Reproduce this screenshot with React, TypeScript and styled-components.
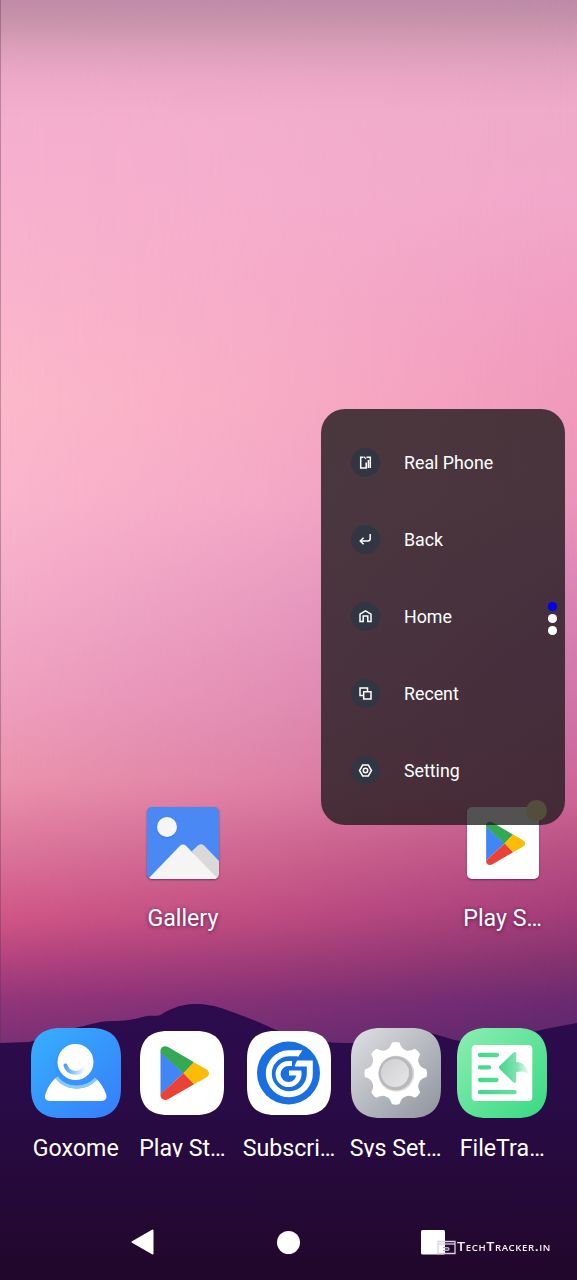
import React from "react";
import styled, { createGlobalStyle } from "styled-components";

const GlobalStyle = createGlobalStyle`
  *, *::before, *::after { box-sizing: border-box; }
  body { margin: 0; background: #22082f; font-family: Roboto, "Noto Sans", sans-serif; }
  svg { display: block; }
`;

const Screen = styled.main`
  position: relative;
  width: 577px;
  height: 1280px;
  overflow: hidden;
  display: flex;
  flex-direction: column;
  isolation: isolate;
`;

const Sky = styled.div`
  position: absolute;
  inset: 0;
  z-index: -1;
  background: linear-gradient(180deg, #bd8aaa 0, #c693aa 20px, #d79db7 45px, #e6a5c2 75px, #f0aaca 110px, #f2a8cb 200px, #f19fc2 300px, #f19abb 400px, #eb95bb 500px, #d983b5 600px, #d075a8 700px, #cc6496 800px, #b95083 850px, #a83f7c 905px, #84336f 960px, #6b2a70 1000px, #5c276c 1045px);
  &::before {
    content: "";
    position: absolute;
    inset: 0;
    background: linear-gradient(180deg, #bf8ba8 0, #c893aa 20px, #da9eb8 45px, #eca8c7 75px, #f5afce 120px, #f8b2cc 250px, #fcb8cb 400px, #fab5cc 500px, #f4abc7 600px, #ee9fbd 700px, #ea93ad 780px, #dc759a 850px, #cf5585 920px, #b3437e 960px, #93357a 1000px, #7a3075 1045px);
    mask-image: linear-gradient(90deg, #000, rgba(0, 0, 0, 0.62) 45%, transparent);
  }
  &::after {
    content: "";
    position: absolute;
    inset: 0 auto 0 0;
    width: 1px;
    background: rgba(80, 50, 80, 0.35);
  }
`;

const Mountains = styled.svg`
  position: absolute;
  left: 0;
  bottom: 0;
  z-index: -1;
`;

const Desktop = styled.section`
  flex: none;
  height: 1028px;
  padding: 807px 21px 0 23px;
  display: grid;
  grid-template-columns: repeat(5, 1fr);
  align-items: start;
`;

const Dock = styled.section`
  flex: none;
  height: 176px;
  padding: 0 21.5px 0 22.5px;
  display: grid;
  grid-template-columns: repeat(5, 1fr);
  align-items: start;
`;

const Launcher = styled.div<{ $column?: number }>`
  display: flex;
  flex-direction: column;
  align-items: center;
  ${({ $column }) => ($column ? `grid-column: ${$column};` : "")}
`;

const IconBox = styled.div<{ $size: number }>`
  position: relative;
  height: ${({ $size }) => $size}px;
  display: flex;
  align-items: center;
  justify-content: center;
`;

const Tile = styled.div<{ $color: string }>`
  width: 72px;
  height: 72px;
  border-radius: 5px;
  overflow: hidden;
  background: ${({ $color }) => $color};
  box-shadow: 0 1px 2px rgba(40, 10, 40, 0.5);
`;

const Badge = styled.span`
  position: absolute;
  right: -8px;
  top: -7px;
  width: 21px;
  height: 21px;
  border-radius: 50%;
  background: #fff0a8;
`;

const Label = styled.span<{ $shadow?: boolean; $gap: number }>`
  margin-top: ${({ $gap }) => $gap}px;
  height: ${({ $shadow }) => ($shadow ? 34 : 23)}px;
  line-height: ${({ $shadow }) => ($shadow ? 26 : 29)}px;
  font-size: 23.2px;
  white-space: nowrap;
  overflow: ${({ $shadow }) => ($shadow ? "visible" : "hidden")};
  color: #fff;
  text-shadow: ${({ $shadow }) => ($shadow ? "0 1px 4px rgba(60,10,50,.75)" : "none")};
`;

const NavBar = styled.nav`
  flex: none;
  height: 76px;
  padding: 0 132px 0 131px;
  display: flex;
  align-items: center;
  justify-content: space-between;
`;

const Menu = styled.aside`
  position: absolute;
  left: 321px;
  top: 409px;
  width: 243.5px;
  height: 415.5px;
  padding: 15px 0 0 30px;
  border-radius: 24px;
  background: linear-gradient(rgba(17, 17, 17, 0.75), rgba(25, 23, 24, 0.75));
`;

const MenuRow = styled.div`
  height: 77px;
  display: flex;
  align-items: center;
  gap: 24px;
  color: #fff;
  font-size: 17.8px;
`;

const MenuIcon = styled.span`
  width: 29px;
  height: 29px;
  border-radius: 50%;
  background: #323643;
  display: flex;
  align-items: center;
  justify-content: center;
`;

const Pager = styled.div`
  position: absolute;
  right: 8px;
  top: 193px;
  display: flex;
  flex-direction: column;
  gap: 3.5px;
`;

const PagerDot = styled.i<{ $active?: boolean }>`
  width: 8.5px;
  height: 8.5px;
  border-radius: 50%;
  background: ${({ $active }) => ($active ? "#0000f5" : "#fff")};
`;

const Watermark = styled.div`
  position: absolute;
  left: 437px;
  top: 1237px;
  display: flex;
  align-items: center;
  gap: 1px;
  height: 20px;
`;

const WatermarkText = styled.span`
  color: #f6f0f8;
  font: 600 12px/20px "Open Sans", sans-serif;
  font-variant-caps: small-caps;
  letter-spacing: 0.5px;
  white-space: nowrap;
  transform: scaleX(1.2);
  transform-origin: left;
`;

const SQUIRCLE =
  "M30 0H60C80 0 90 10 90 30V60C90 80 80 90 60 90H30C10 90 0 80 0 60V30C0 10 10 0 30 0Z";

const PlayMark = () => (
  <>
    <path d="M20.5 21V63.5L43.7 42Z" fill="#4285f4" />
    <path d="M20.5 21C20 16 24.500 13.800 28.500 16.200L54 31.200 43.600 42.200 20.500 21.500Z" fill="#34a853" />
    <path d="M54 31.200L66.200 38.200C69.900 40.400 69.900 44.200 66.200 46.400L54 53.200 43.300 42.200Z" fill="#fbbc04" />
    <path d="M20.500 63.300C20 68.200 24.500 70.300 28.500 68L54 53.200 43.500 42.200Z" fill="#ea4335" />
  </>
);

const PlayDockIcon = () => (
  <svg width="84" height="84" viewBox="0 0 84 84">
    <path d={SQUIRCLE} transform="scale(.9333)" fill="#fff" />
    <PlayMark />
  </svg>
);

const PlayTileIcon = () => (
  <svg width="72" height="72" viewBox="0 0 72 72">
    <g transform="translate(2.600 2.500) scale(.805)">
      <PlayMark />
    </g>
  </svg>
);

const GalleryIcon = () => (
  <svg width="72" height="72" viewBox="0 0 72 72">
    <circle cx="20" cy="21" r="10.500" fill="#2f6ad2" opacity=".35" />
    <circle cx="20" cy="20" r="10" fill="#f5f5f5" />
    <path d="M45 44L51 38.500Q54 36 57 38.500L72 54V72H58Z" fill="#d9d9da" />
    <path d="M2 71L33 38.800Q36 36 39 38.800L71 72H2Z" fill="#f5f5f5" />
  </svg>
);

const UserIcon = () => (
  <svg width="90" height="90" viewBox="0 0 90 90">
    <defs>
      <linearGradient id="userBg" x1="0" y1="0" x2="1" y2="1">
        <stop offset="0" stopColor="#36b0fe" />
        <stop offset="1" stopColor="#367dfa" />
      </linearGradient>
      <linearGradient id="smile" x1="0" y1="0" x2="1" y2="0">
        <stop offset="0" stopColor="#4a9ff2" />
        <stop offset="1" stopColor="#fff" />
      </linearGradient>
    </defs>
    <path d={SQUIRCLE} fill="url(#userBg)" />
    <path d="M25.500 49.500C31 57 37 60.500 46 60.500S61 57 66 51.500C70 55 73 61 75 66C76.500 70 74.500 73 70.500 73H19C14.500 73 13 70 14.500 66C16.500 60 20 53.500 25.500 49.500Z" fill="#fff" />
    <path d="M25.500 49.500C30 55.500 36 59 45 59S60 57 65 50.500" fill="none" stroke="#8cc8fb" strokeWidth="3" />
    <circle cx="44.500" cy="36.500" r="20.500" fill="#3893fb" />
    <circle cx="44.500" cy="34" r="18" fill="#fff" />
    <path d="M34.500 37.500C37 46 49 47.500 54.500 39" fill="none" stroke="url(#smile)" strokeWidth="4" strokeLinecap="round" />
  </svg>
);

const SpiralIcon = () => (
  <svg width="84" height="84" viewBox="0 0 84 84">
    <path d={SQUIRCLE} transform="scale(.9333)" fill="#fff" />
    <circle cx="41.500" cy="42" r="31.500" fill="#1a6fe0" />
    <g fill="none" stroke="#fff">
      <path d="M52 22.200H41.500A20.500 20.500 0 1 0 62.800 42V32.500H48" strokeWidth="6" />
      <path d="M49 32.500H41.500A10.500 10.500 0 1 0 52 42H42" strokeWidth="5" />
    </g>
    <path d="M50 19.200H55.500L51.500 25.200H50Z" fill="#fff" />
    <path d="M51.200 27L47.500 35H45V27Z" fill="#1a6fe0" />
  </svg>
);

const gearPath = (() => {
  const cx = 44.7;
  const cy = 45.3;
  const at = (r: number, deg: number) => {
    const a = (deg * Math.PI) / 180;
    return `${(cx + r * Math.cos(a)).toFixed(2)} ${(cy + r * Math.sin(a)).toFixed(2)}`;
  };
  let d = "";
  for (let i = 0; i < 8; i++) {
    const t = i * 45;
    d += `${i ? "L" : "M"}${at(31, t - 7)}Q${at(32, t)} ${at(31, t + 7)}`;
    d += `C${at(27, t + 11)} ${at(25, t + 16)} ${at(25.3, t + 22.5)}`;
    d += `C${at(25, t + 29)} ${at(27, t + 34)} ${at(31, t + 38)}`;
  }
  return d + "Z";
})();

const GearIcon = () => (
  <svg width="90" height="90" viewBox="0 0 90 90">
    <defs>
      <linearGradient id="gearBg" x1="0" y1="0" x2="1" y2="1">
        <stop offset="0" stopColor="#e0e0e3" />
        <stop offset="1" stopColor="#8d939d" />
      </linearGradient>
      <linearGradient id="knob" x1="0" y1="0" x2="1" y2="1">
        <stop offset="0" stopColor="#cfcfd1" />
        <stop offset="1" stopColor="#e6e6e8" />
      </linearGradient>
    </defs>
    <path d={SQUIRCLE} fill="url(#gearBg)" />
    <path d={gearPath} fill="#fff" />
    <circle cx="45.300" cy="45.700" r="18" fill="#dcdcde" />
    <circle cx="44.700" cy="45.300" r="17" fill="#b9b9bc" />
    <circle cx="44" cy="45" r="14" fill="url(#knob)" />
  </svg>
);

const TransferIcon = () => (
  <svg width="90" height="90" viewBox="0 0 90 90">
    <defs>
      <linearGradient id="fileBg" x1="0" y1="0" x2="1" y2="1">
        <stop offset="0" stopColor="#8ceeb2" />
        <stop offset="1" stopColor="#38d983" />
      </linearGradient>
      <linearGradient id="bars" gradientUnits="userSpaceOnUse" x1="20" y1="0" x2="60" y2="0">
        <stop offset="0" stopColor="#41d889" />
        <stop offset="1" stopColor="#68dfa2" />
      </linearGradient>
      <linearGradient id="arrow" gradientUnits="userSpaceOnUse" x1="42" y1="0" x2="72" y2="0">
        <stop offset="0" stopColor="#43d58b" />
        <stop offset=".6" stopColor="#83e2b2" />
        <stop offset="1" stopColor="#83e2b2" stopOpacity=".1" />
      </linearGradient>
    </defs>
    <path d={SQUIRCLE} fill="url(#fileBg)" />
    <rect x="14.700" y="17" width="60.600" height="56" rx="4" fill="#fff" />
    <path d="M23 27H40M23 39.400H32M23 52H39.500M23 64.200H57.500" stroke="url(#bars)" strokeWidth="4.300" strokeLinecap="round" />
    <path d="M43 37.500L56 25Q59 22.500 59.300 26V34C66 34 71 39 72 47C68 43 65 43 59.300 44V52.500Q59 56.500 56 54L43 41.500Q41 39.500 43 37.500Z" fill="url(#arrow)" />
  </svg>
);

const menuIcons: Record<string, React.ReactNode> = {
  "Real Phone": (
    <>
      <path d="M5.500 2.300H2.700V13H8.200V7.500" />
      <path d="M8.500 2.300H12.300V13M10.400 5V13" />
      <path d="M6 1.600L8 4" strokeWidth="1.100" />
    </>
  ),
  Back: <path d="M12.200 2V6.500Q12.200 9 9.700 9H2.500M5.600 5.800L2.300 9 5.600 12.200" />,
  Home: <path d="M2 5.200L7.500 1.800 13 5.200V12.500H9.800V7H5.200V12.500H2Z" />,
  Recent: <path d="M9.500 5V2H2V9.500H5M5.700 5.700H13V13H5.700Z" />,
  Setting: (
    <>
      <path d="M4.700 2H10.300L13.500 7.500 10.300 13H4.700L1.500 7.500Z" />
      <circle cx="7.500" cy="7.500" r="2.200" />
    </>
  ),
};

const dockApps = [
  { name: "Goxome", icon: <UserIcon /> },
  { name: "Play St…", icon: <PlayDockIcon /> },
  { name: "Subscri…", icon: <SpiralIcon /> },
  { name: "Sys Set…", icon: <GearIcon /> },
  { name: "FileTra…", icon: <TransferIcon /> },
];

export default function App() {
  return (
    <>
      <GlobalStyle />
      <Screen>
        <Sky />
        <Mountains width="577" height="280" viewBox="0 1000 577 280">
          <defs>
            <linearGradient id="hill" x1="0" y1="0" x2="0" y2="1">
              <stop offset="0" stopColor="#2d0c4e" />
              <stop offset=".35" stopColor="#290b47" />
              <stop offset=".7" stopColor="#250937" />
              <stop offset="1" stopColor="#21072a" />
            </linearGradient>
          </defs>
          <path
            d="M0 1043L29 1042C50 1037 65 1030 79 1027S100 1021 112 1021 132 1020 147 1016C152 1015 158 1017 162 1014S180 1004 194 1004C206 1004 216 1006 224 1009S250 1018 265 1025 295 1037 313 1040 340 1043 353 1043C375 1038 392 1030 410 1030S440 1037 460 1041C490 1042 520 1035 545 1029L577 1023V1280H0Z"
            fill="url(#hill)"
          />
        </Mountains>
        <Desktop>
          <Launcher $column={2}>
            <IconBox $size={72}>
              <Tile $color="#4a89f3"><GalleryIcon /></Tile>
            </IconBox>
            <Label $shadow $gap={26}>Gallery</Label>
          </Launcher>
          <Launcher $column={5}>
            <IconBox $size={72}>
              <Tile $color="#fff"><PlayTileIcon /></Tile>
              <Badge />
            </IconBox>
            <Label $shadow $gap={26}>Play S…</Label>
          </Launcher>
        </Desktop>
        <Dock>
          {dockApps.map((app) => (
            <Launcher key={app.name}>
              <IconBox $size={90}>{app.icon}</IconBox>
              <Label $gap={16}>{app.name}</Label>
            </Launcher>
          ))}
        </Dock>
        <NavBar>
          <svg width="23" height="26" viewBox="0 0 23 26">
            <path d="M21.500 1.500V24.500L1.500 13Z" fill="#fff" stroke="#fff" strokeWidth="2" strokeLinejoin="round" />
          </svg>
          <svg width="25" height="23" viewBox="0 0 25 23"><circle cx="13.500" cy="11.500" r="11.500" fill="#fff" /></svg>
          <svg width="24" height="25" viewBox="0 0 24 25"><rect width="24" height="24.500" rx="1.500" fill="#fff" /></svg>
        </NavBar>
        <Menu>
          {Object.entries(menuIcons).map(([name, icon]) => (
            <MenuRow key={name}>
              <MenuIcon>
                <svg width="15" height="15" viewBox="0 0 15 15" fill="none" stroke="#fff" strokeWidth="1.500">{icon}</svg>
              </MenuIcon>
              {name}
            </MenuRow>
          ))}
          <Pager>
            <PagerDot $active />
            <PagerDot />
            <PagerDot />
          </Pager>
        </Menu>
        <Watermark>
          <svg width="19" height="15" viewBox="0 0 19 15" fill="none" stroke="#d9d0de">
            <path d="M1 1.500H18V13.500H1Z" strokeWidth="1.300" />
            <path d="M1 4H18" strokeWidth="1.300" />
            <path d="M6 7.500H11.500V10.500H6M8 9H13" stroke="#b9a9c2" />
          </svg>
          <WatermarkText>TechTracker.in</WatermarkText>
        </Watermark>
      </Screen>
    </>
  );
}
